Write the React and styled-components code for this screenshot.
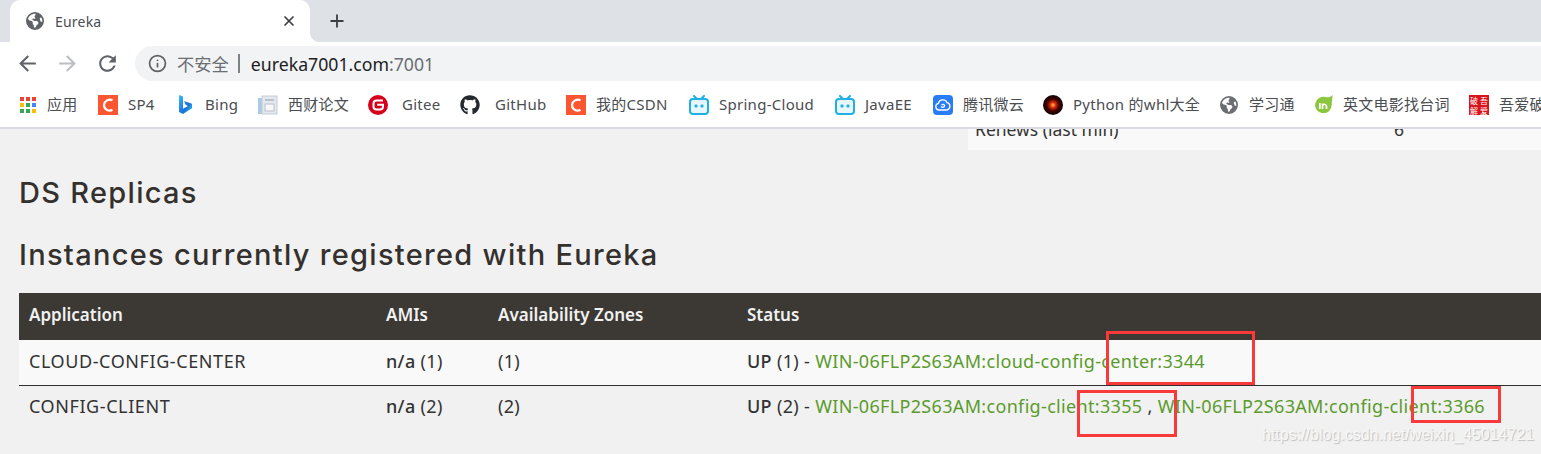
import styled, { createGlobalStyle } from "styled-components";
import { Info, X, Plus } from "lucide-react";
import { FaGithub, FaEarthAmericas } from "react-icons/fa6";

const GlobalStyle = createGlobalStyle`
  html, body {
    margin: 0;
    padding: 0;
    width: 1541px;
    height: 454px;
    overflow: hidden;
    background: #f1f1f1;
    font-family: "Noto Sans", "Noto Sans CJK SC", sans-serif;
  }
`;

const Shot = styled.div`
  position: relative;
  width: 1541px;
  height: 454px;
  overflow: hidden;
`;

const TabStrip = styled.div`
  height: 42px;
  background: #dee1e6;
  display: flex;
  align-items: flex-end;
  padding-left: 10px;
`;

const Tab = styled.div`
  position: relative;
  width: 300px;
  height: 42px;
  background: #fff;
  border-radius: 10px 10px 0 0;
  display: flex;
  align-items: center;
  padding: 0 13px 0 16px;
  box-sizing: border-box;
  color: #4a4d51;
  font-size: 14px;
  svg.globe { color: #5f6368; margin-right: 11px; }
  span { flex: 1; letter-spacing: 0.2px; }
  &::after {
    content: "";
    position: absolute;
    right: -10px;
    bottom: 0;
    width: 10px;
    height: 10px;
    background: radial-gradient(circle at 100% 0, transparent 10px, #fff 10.5px);
  }
`;

const NewTab = styled.div`
  margin: 0 0 0 17px;
  height: 42px;
  display: flex;
  align-items: center;
  color: #3c4043;
`;

const Toolbar = styled.div`
  height: 43px;
  background: #fff;
  display: flex;
  align-items: center;
  padding-left: 15px;
  gap: 15px;
`;

const NavButton = styled.svg`
  width: 25px;
  height: 25px;
  flex: none;
  fill: ${(p) => (p.$off ? "#bcbec2" : "#5f6368")};
`;

const Omnibox = styled.div`
  flex: 1;
  height: 35px;
  margin-right: -30px;
  background: #f1f3f4;
  border-radius: 18px;
  display: flex;
  align-items: center;
  padding-left: 13px;
  color: #5f6368;
  font-size: 17.7px;
`;

const Insecure = styled.span`
  margin-left: 10px;
  font-size: 17.3px;
  color: #6a6d71;
`;

const Divider = styled.span`
  width: 2px;
  height: 19px;
  background: #7d8084;
  margin: 0 11px 0 9px;
`;

const Host = styled.span`
  color: #202124;
  font-family: "Noto Sans", sans-serif;
`;

const Port = styled.span`
  color: #6a6d71;
`;

const BookmarkBar = styled.div`
  height: 42px;
  box-sizing: content-box;
  background: #fff;
  border-bottom: 2px solid #d9dbe0;
  display: flex;
  align-items: center;
  padding-left: 20px;
  gap: 20px;
  white-space: nowrap;
  overflow: hidden;
`;

const Bookmark = styled.div`
  display: flex;
  align-items: center;
  gap: ${(p) => p.$gap || 10}px;
  font-size: 15px;
  letter-spacing: 0.27px;
  line-height: 20px;
  color: #4a4d51;
  flex: none;
  width: ${(p) => (p.$w ? `${p.$w}px` : "auto")};
  svg { flex: none; margin-top: -2px; }
`;

const BookmarkLabel = styled.span`
  margin-top: -4px;
`;

const SealIcon = styled.div`
  width: 20px;
  height: 20px;
  margin-top: -2px;
  background: #d9141c;
  color: #fff;
  font-size: 8px;
  line-height: 9px;
  letter-spacing: 0;
  display: grid;
  grid-template-columns: 1fr 1fr;
  place-items: center;
  overflow: hidden;
  font-family: "Noto Sans CJK SC", sans-serif;
`;

const Page = styled.main`
  padding: 0 0 0 19px;
`;

const StatsClip = styled.div`
  height: 21px;
  margin: 0 -19px 0 949px;
  padding-left: 7px;
  background: #f9f9f9;
  overflow: hidden;
  display: flex;
  color: #333;
  font-size: 17.5px;
  line-height: 20px;
`;

const StatCell = styled.div`
  width: ${(p) => p.$w}px;
  margin-top: -10px;
  flex: none;
`;

const Heading = styled.h2`
  margin: ${(p) => p.$top}px 0 0;
  font-family: Inter, "Noto Sans", sans-serif;
  font-weight: 500;
  font-size: 29px;
  line-height: 34px;
  color: #34302d;
  letter-spacing: ${(p) => p.$ls}px;
`;

const Table = styled.table`
  margin-top: 21px;
  width: 1522px;
  border-collapse: collapse;
  table-layout: fixed;
  font-size: 18px;
  letter-spacing: 0.33px;
  color: #333;
  font-family: "Noto Sans", sans-serif;
  th {
    height: 47px;
    padding: 0 10px 5px;
    box-sizing: border-box;
    background: #3c3834;
    color: #f1f1f1;
    text-align: left;
    font-size: 17px;
    letter-spacing: 0;
    font-weight: 600;
  }
  td {
    padding: 0 10px 2px;
    white-space: nowrap;
  }
  tbody tr:first-child { height: 45px; background: #f9f9f9; }
  tbody tr:first-child td { border-bottom: 1px solid #34302d; }
  tbody tr:last-child { height: 44px; }
`;

const AppName = styled.span`
  letter-spacing: 0.58px;
`;

const Strong = styled.b`
  font-weight: 500;
`;

const InstanceLink = styled.a`
  color: #5a9b2c;
  text-decoration: none;
`;

const RedBox = styled.div`
  position: absolute;
  left: ${(p) => p.$x}px;
  top: ${(p) => p.$y}px;
  width: ${(p) => p.$w}px;
  height: ${(p) => p.$h}px;
  border: 3px solid #f83a3a;
  box-sizing: border-box;
`;

const Watermark = styled.div`
  position: absolute;
  left: 1262px;
  top: 425px;
  font-family: "Liberation Sans", sans-serif;
  font-size: 16px;
  line-height: 20px;
  color: #f7f7f7;
  text-shadow: 1px 1px 1px rgba(150, 150, 150, 0.55);
`;

const AppsIcon = () => (
  <svg width="16" height="16" viewBox="0 0 16 16">
    {[
      "#ea4335", "#ea4335", "#ea4335",
      "#fbbc05", "#34a853", "#4285f4",
      "#34a853", "#34a853", "#fbbc05",
    ].map((c, i) => (
      <rect key={i} x={(i % 3) * 6} y={Math.floor(i / 3) * 6} width="4" height="4" fill={c} />
    ))}
  </svg>
);

const CsdnIcon = () => (
  <svg width="20" height="20" viewBox="0 0 20 20">
    <rect width="20" height="20" fill="#fc5531" />
    <path d="M14.5 5.2A6 6 0 0 0 6 10a5.6 5.6 0 0 0 8.5 4.8" fill="none" stroke="#fff" strokeWidth="2.2" />
  </svg>
);

const BingIcon = () => (
  <svg width="14" height="20" viewBox="0 0 14 20">
    <defs>
      <linearGradient id="bingG" x1="0" y1="0" x2="1" y2="1">
        <stop offset="0" stopColor="#37bdff" />
        <stop offset="0.6" stopColor="#1a6fe0" />
        <stop offset="1" stopColor="#2ad4c8" />
      </linearGradient>
    </defs>
    <path d="M1 0l4 1.4v12.4l5-2.8-2.4-1.2L6 6l8 2.8v4.4L5 19 1 17z" fill="url(#bingG)" />
  </svg>
);

const DocIcon = () => (
  <svg width="20" height="20" viewBox="0 0 20 20">
    <rect x="0" y="3" width="5" height="16" fill="#a9cbe6" />
    <rect x="4" y="1" width="15" height="18" fill="#e4e8ee" stroke="#c4ccd6" />
    <rect x="7" y="4" width="9" height="2" fill="#b9c2cc" />
    <rect x="7" y="9" width="9" height="7" fill="#f6f7f9" stroke="#b9c2cc" />
  </svg>
);

const GiteeIcon = () => (
  <svg width="20" height="20" viewBox="0 0 20 20">
    <circle cx="10" cy="10" r="10" fill="#d6001c" />
    <path d="M15 5.5H8.500a3 3 0 0 0-3 3v3a3 3 0 0 0 3 3H12a3 3 0 0 0 3-3V9.700H9.200" fill="none" stroke="#fff" strokeWidth="2" />
  </svg>
);

const BiliIcon = () => (
  <svg width="20" height="20" viewBox="0 0 20 20">
    <path d="M5 1l3 3M15 1l-3 3" stroke="#20b0e3" strokeWidth="2" strokeLinecap="round" />
    <rect x="1" y="4" width="18" height="15" rx="3" fill="#e8f7fd" stroke="#20b0e3" strokeWidth="2" />
    <rect x="5.500" y="9.500" width="3" height="3" rx="1" fill="#20b0e3" />
    <rect x="11.500" y="9.500" width="3" height="3" rx="1" fill="#20b0e3" />
  </svg>
);

const WeiyunIcon = () => (
  <svg width="20" height="20" viewBox="0 0 20 20">
    <rect width="20" height="20" rx="4" fill="#2a7cf6" />
    <path d="M6 15a3.400 3.400 0 0 1-.6-6.700A4.600 4.600 0 0 1 14 7.600 3.800 3.800 0 0 1 14 15zM8 11.500c1 1.200 3.600 1 3.600-.7 0-1.600-2.200-1.900-3-.6" fill="none" stroke="#fff" strokeWidth="1.3" />
  </svg>
);

const PythonIcon = () => (
  <svg width="20" height="20" viewBox="0 0 20 20">
    <defs>
      <radialGradient id="pyG">
        <stop offset="0" stopColor="#ffd23a" />
        <stop offset="0.25" stopColor="#e5300f" />
        <stop offset="0.6" stopColor="#400" />
        <stop offset="1" stopColor="#0c0505" />
      </radialGradient>
    </defs>
    <circle cx="10" cy="10" r="10" fill="url(#pyG)" />
  </svg>
);

const LeafIcon = () => (
  <svg width="18" height="20" viewBox="0 0 18 20">
    <path d="M18 0c-1 2-.6 4-1 6.500-.2 1-.3 2-.3 3.500a8.300 8.300 0 1 1-6-8c2 .5 4.500.6 7.300-2z" fill="#8cc63f" />
    <rect x="4" y="8" width="1.700" height="6" fill="#fff" />
    <path d="M7.500 14V8.500M7.500 10.500c1-1.500 4-1.500 4 .8V14" fill="none" stroke="#fff" strokeWidth="1.700" />
  </svg>
);

const bookmarks = [
  { label: "应用", icon: <AppsIcon />, gap: 11, w: 58 },
  { label: "SP4", icon: <CsdnIcon />, w: 60 },
  { label: "Bing", icon: <BingIcon />, gap: 13, w: 60 },
  { label: "西财论文", icon: <DocIcon />, w: 90 },
  { label: "Gitee", icon: <GiteeIcon />, gap: 14, w: 72 },
  { label: "GitHub", icon: <FaGithub size={20} color="#24292e" />, gap: 15, w: 86 },
  { label: "我的CSDN", icon: <CsdnIcon />, w: 103 },
  { label: "Spring-Cloud", icon: <BiliIcon />, w: 126 },
  { label: "JavaEE", icon: <BiliIcon />, w: 78 },
  { label: "腾讯微云", icon: <WeiyunIcon />, w: 90 },
  { label: "Python 的whl大全", icon: <PythonIcon />, w: 157 },
  { label: "学习通", icon: <FaEarthAmericas size={18} color="#6a6d71" />, gap: 11, w: 75 },
  { label: "英文电影找台词", icon: <LeafIcon />, w: 134 },
  {
    label: "吾爱破解",
    icon: (
      <SealIcon>
        <span>破</span><span>吾</span><span>解</span><span>爱</span>
      </SealIcon>
    ),
  },
];

export default function App() {
  return (
    <Shot>
      <GlobalStyle />
      <TabStrip>
        <Tab>
          <FaEarthAmericas className="globe" size={18} />
          <span>Eureka</span>
          <X size={16} strokeWidth={2.6} color="#3c4043" />
        </Tab>
        <NewTab>
          <Plus size={20} strokeWidth={2.2} />
        </NewTab>
      </TabStrip>
      <Toolbar>
        <NavButton viewBox="0 0 24 24">
          <path d="M20 11H7.830l5.590-5.590L12 4l-8 8 8 8 1.410-1.410L7.830 13H20v-2z" />
        </NavButton>
        <NavButton viewBox="0 0 24 24" $off>
          <path d="M12 4l-1.410 1.410L16.170 11H4v2h12.170l-5.580 5.590L12 20l8-8z" />
        </NavButton>
        <NavButton viewBox="0 0 24 24">
          <path d="M17.650 6.350C16.200 4.900 14.210 4 12 4c-4.420 0-7.990 3.580-7.990 8s3.570 8 7.990 8c3.730 0 6.840-2.550 7.730-6h-2.080c-.82 2.330-3.040 4-5.650 4-3.310 0-6-2.690-6-6s2.690-6 6-6c1.660 0 3.140.69 4.220 1.780L13 11h7V4l-2.350 2.350z" />
        </NavButton>
        <Omnibox>
          <Info size={19} strokeWidth={2.2} />
          <Insecure>不安全</Insecure>
          <Divider />
          <Host>eureka7001.com<Port>:7001</Port></Host>
        </Omnibox>
      </Toolbar>
      <BookmarkBar>
        {bookmarks.map((b) => (
          <Bookmark key={b.label} $gap={b.gap} $w={b.w}>
            {b.icon}
            <BookmarkLabel>{b.label}</BookmarkLabel>
          </Bookmark>
        ))}
      </BookmarkBar>
      <Page>
        <StatsClip>
          <StatCell $w={419}>Renews (last min)</StatCell>
          <StatCell $w={100}>6</StatCell>
        </StatsClip>
        <Heading $top={26} $ls={1.3}>DS Replicas</Heading>
        <Heading $top={28} $ls={1.3}>Instances currently registered with Eureka</Heading>
        <Table>
          <colgroup>
            <col width="357" />
            <col width="112" />
            <col width="249" />
            <col />
          </colgroup>
          <thead>
            <tr>
              <th>Application</th>
              <th>AMIs</th>
              <th>Availability Zones</th>
              <th>Status</th>
            </tr>
          </thead>
          <tbody>
            <tr>
              <td><AppName>CLOUD-CONFIG-CENTER</AppName></td>
              <td><Strong>n/a</Strong> (1)</td>
              <td>(1)</td>
              <td>
                <Strong>UP</Strong> (1) - <InstanceLink>WIN-06FLP2S63AM:cloud-config-center:3344</InstanceLink>
              </td>
            </tr>
            <tr>
              <td><AppName>CONFIG-CLIENT</AppName></td>
              <td><Strong>n/a</Strong> (2)</td>
              <td>(2)</td>
              <td>
                <Strong>UP</Strong> (2) - <InstanceLink>WIN-06FLP2S63AM:config-client:3355</InstanceLink> , <InstanceLink>WIN-06FLP2S63AM:config-client:3366</InstanceLink>
              </td>
            </tr>
          </tbody>
        </Table>
      </Page>
      <RedBox $x={1106} $y={331} $w={149} $h={54} />
      <RedBox $x={1077} $y={390} $w={100} $h={47} />
      <RedBox $x={1411} $y={386} $w={90} $h={37} />
      <Watermark>https://blog.csdn.net/weixin_45014721</Watermark>
    </Shot>
  );
}
